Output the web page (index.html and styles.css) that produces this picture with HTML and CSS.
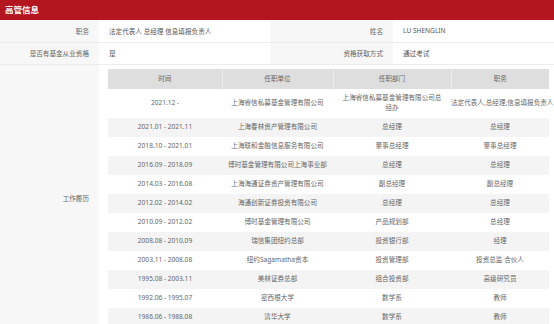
FILE: index.html
```html
<!DOCTYPE html>
<html lang="zh-CN">
<head>
    <meta charset="UTF-8">
    <meta name="viewport" content="width=device-width, initial-scale=1.0">
    <title>高管信息</title>
    <link rel="stylesheet" href="styles.css">
</head>
<body>
    <div class="panel">
        <div class="panel-title">高管信息</div>

        <table class="info">
            <colgroup>
                <col class="c-label">
                <col class="c-value">
                <col class="c-label2">
                <col>
            </colgroup>
            <tr>
                <th>职务</th>
                <td>法定代表人 总经理 信息填报负责人</td>
                <th>姓名</th>
                <td>LU SHENGLIN</td>
            </tr>
            <tr>
                <th>是否有基金从业资格</th>
                <td>是</td>
                <th>资格获取方式</th>
                <td>通过考试</td>
            </tr>
            <tr>
                <th>工作履历</th>
                <td colspan="3" class="history-cell">
                    <table class="history">
                        <colgroup>
                            <col class="h-time">
                            <col class="h-org">
                            <col class="h-dept">
                            <col>
                        </colgroup>
                        <thead>
                            <tr>
                                <th>时间</th>
                                <th>任职单位</th>
                                <th>任职部门</th>
                                <th>职务</th>
                            </tr>
                        </thead>
                        <tbody>
                            <tr>
                                <td>2021.12 -</td>
                                <td>上海睿信私募基金管理有限公司</td>
                                <td class="dept">上海睿信私募基金管理有限公司总经办</td>
                                <td>法定代表人,总经理,信息填报负责人</td>
                            </tr>
                            <tr>
                                <td>2021.01 - 2021.11</td>
                                <td>上海春林资产管理有限公司</td>
                                <td class="dept">总经理</td>
                                <td>总经理</td>
                            </tr>
                            <tr>
                                <td>2018.10 - 2021.01</td>
                                <td>上海联和金融信息服务有限公司</td>
                                <td class="dept">董事总经理</td>
                                <td>董事总经理</td>
                            </tr>
                            <tr>
                                <td>2016.09 - 2018.09</td>
                                <td>博时基金管理有限公司上海事业部</td>
                                <td class="dept">总经理</td>
                                <td>总经理</td>
                            </tr>
                            <tr>
                                <td>2014.03 - 2016.08</td>
                                <td>上海海通证券资产管理有限公司</td>
                                <td class="dept">副总经理</td>
                                <td>副总经理</td>
                            </tr>
                            <tr>
                                <td>2012.02 - 2014.02</td>
                                <td>海通创新证券投资有限公司</td>
                                <td class="dept">总经理</td>
                                <td>总经理</td>
                            </tr>
                            <tr>
                                <td>2010.09 - 2012.02</td>
                                <td>博时基金管理有限公司</td>
                                <td class="dept">产品规划部</td>
                                <td>总经理</td>
                            </tr>
                            <tr>
                                <td>2008.08 - 2010.09</td>
                                <td>瑞信集团纽约总部</td>
                                <td class="dept">投资银行部</td>
                                <td>经理</td>
                            </tr>
                            <tr>
                                <td>2003.11 - 2008.08</td>
                                <td>纽约Sagamatha资本</td>
                                <td class="dept">投资管理部</td>
                                <td>投资总监 合伙人</td>
                            </tr>
                            <tr>
                                <td>1995.08 - 2003.11</td>
                                <td>美林证券总部</td>
                                <td class="dept">组合投资部</td>
                                <td>高级研究员</td>
                            </tr>
                            <tr>
                                <td>1992.06 - 1995.07</td>
                                <td>密西根大学</td>
                                <td class="dept">数学系</td>
                                <td>教师</td>
                            </tr>
                            <tr>
                                <td>1986.06 - 1988.08</td>
                                <td>清华大学</td>
                                <td class="dept">数学系</td>
                                <td>教师</td>
                            </tr>
                        </tbody>
                    </table>
                </td>
            </tr>
        </table>
    </div>
</body>
</html>
```

FILE: styles.css
```css
:root {
    --brand-red: #b3161f;
    --label-bg: #f7f7f7;
    --line: #ececec;
}

body {
    margin: 0;
    background: #fff;
    color: #666;
    font-family: "Noto Sans", "Noto Sans CJK SC", sans-serif;
    font-size: 6.6px;
    overflow: hidden;
}

.panel-title {
    background: var(--brand-red);
    color: #fff;
    font-weight: bold;
    font-size: 8.5px;
    height: 20px;
    line-height: 19px;
    padding-left: 5px;
}

.info {
    width: 100%;
    border-collapse: collapse;
    table-layout: fixed;
}

.info .c-label { width: 99px; }
.info .c-value { width: 171px; }
.info .c-label2 { width: 123px; }

.info > tbody > tr {
    height: 22px;
    border-bottom: 1px solid var(--line);
}

.info > tbody > tr > th {
    background: var(--label-bg);
    font-weight: normal;
    text-align: right;
    padding: 0 10px;
    color: #666;
}

.info > tbody > tr > td {
    padding: 0 10px;
    text-align: left;
    color: #555;
}

.info > tbody > tr > td.history-cell {
    padding: 4px 5px 5px 9px;
}

.history {
    width: 100%;
    border-collapse: collapse;
    table-layout: fixed;
    line-height: 10px;
}

.history .h-time { width: 114px; }
.history .h-org { width: 111px; }
.history .h-dept { width: 118px; }

.history thead tr {
    height: 20px;
}

.history th {
    background: #dedede;
    font-weight: normal;
    color: #666;
    text-align: center;
    border-left: 1px solid #ebebeb;
}

.history th:first-child {
    border-left: none;
}

.history tbody tr {
    height: 19px;
}

.history td {
    text-align: center;
    padding: 0 2px;
    color: #666;
    white-space: nowrap;
}

.history td.dept {
    padding: 4.5px 8px;
    white-space: normal;
}

.history td:last-child {
    padding: 0;
}

.history tbody tr:nth-child(even) td {
    background: #f4f4f4;
}
```
